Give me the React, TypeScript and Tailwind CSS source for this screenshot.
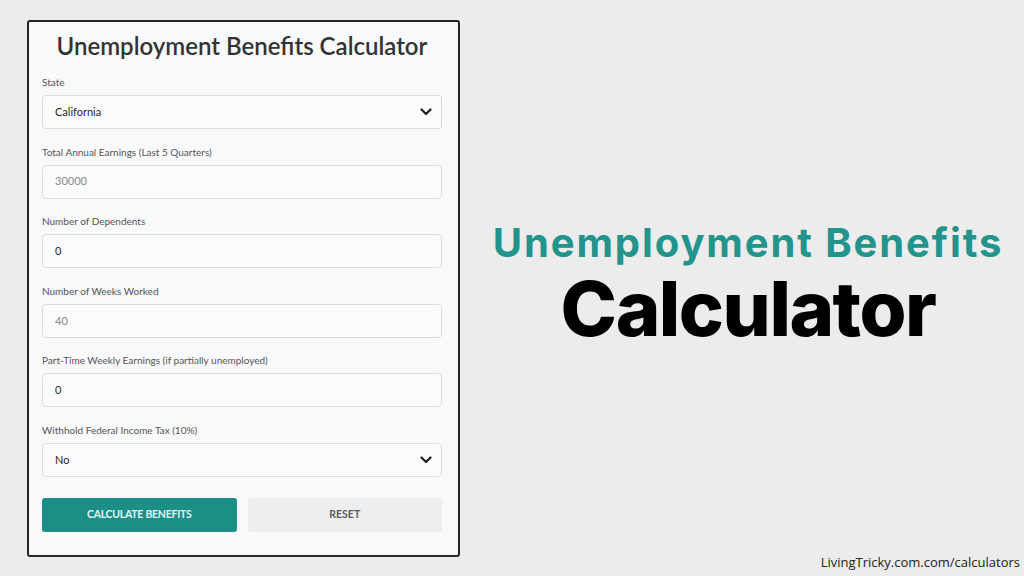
import * as React from "react";

const fields = [
  { label: "State", kind: "select", value: "California" },
  { label: "Total Annual Earnings (Last 5 Quarters)", kind: "input", value: "30000", muted: true },
  { label: "Number of Dependents", kind: "input", value: "0" },
  { label: "Number of Weeks Worked", kind: "input", value: "40", muted: true },
  { label: "Part-Time Weekly Earnings (if partially unemployed)", kind: "input", value: "0" },
  { label: "Withhold Federal Income Tax (10%)", kind: "select", value: "No" },
];

function Chevron() {
  return (
    <svg width="12" height="8" viewBox="0 0 12 8" className="shrink-0">
      <polyline points="1.5,1.5 6,6 10.5,1.5" fill="none" stroke="#1f1f1f" strokeWidth="2.2" strokeLinecap="round" strokeLinejoin="round" />
    </svg>
  );
}

export default function App() {
  return (
    <div className="flex h-[576px] w-[1024px] bg-[#ececec] font-['Lato','Open_Sans',sans-serif] overflow-hidden">
      <div className="ml-[27px] mt-[20px] h-[537px] w-[433px] shrink-0 rounded-[3px] border-2 border-[#262626] bg-[#f8f9fa] pl-[13px] pr-[16px] pt-[9px]">
        <h1 className="text-center text-[24px] leading-[30px] font-semibold text-[#333333]">
          Unemployment Benefits Calculator
        </h1>

        <div className="mt-[15px] flex flex-col gap-[16.6px]">
          {fields.map((f) => (
            <div key={f.label}>
              <div className="text-[10px] leading-[12px] text-[#555555]">{f.label}</div>
              <div className="mt-[7px] flex h-[34px] items-center justify-between rounded-[4px] border border-[#dcdcdc] bg-[#fbfbfb] pl-[12px] pr-[9px]">
                <span className={`text-[11px] ${f.muted ? "text-[#8a8a8a]" : "text-[#262626]"}`}>{f.value}</span>
                {f.kind === "select" && <Chevron />}
              </div>
            </div>
          ))}
        </div>

        <div className="mt-[21px] flex gap-[11px]">
          <button className="h-[34px] flex-1 rounded-[3px] bg-[#1b8f86] text-[10.5px] font-bold tracking-tight text-[#e6f4f2]">
            CALCULATE BENEFITS
          </button>
          <button className="h-[34px] flex-1 rounded-[3px] bg-[#eceeef] text-[10.5px] font-bold text-[#5a5a5a]">
            RESET
          </button>
        </div>
      </div>

      <div className="flex flex-1 flex-col">
        <div className="flex flex-1 flex-col items-center justify-center pt-[14px] pl-[12px] font-['Inter',sans-serif]">
          <div className="text-[40px] leading-[48px] font-bold tracking-[1.9px] text-[#23948c]">
            Unemployment Benefits
          </div>
          <div className="mt-[1px] text-[76px] leading-[80px] font-extrabold tracking-[-1.5px] text-black">
            Calculator
          </div>
        </div>
        <div className="pb-[4px] pr-[4px] text-right text-[13px] text-[#222222] font-['Open_Sans',sans-serif]">
          LivingTricky.com.com/calculators
        </div>
      </div>
    </div>
  );
}
